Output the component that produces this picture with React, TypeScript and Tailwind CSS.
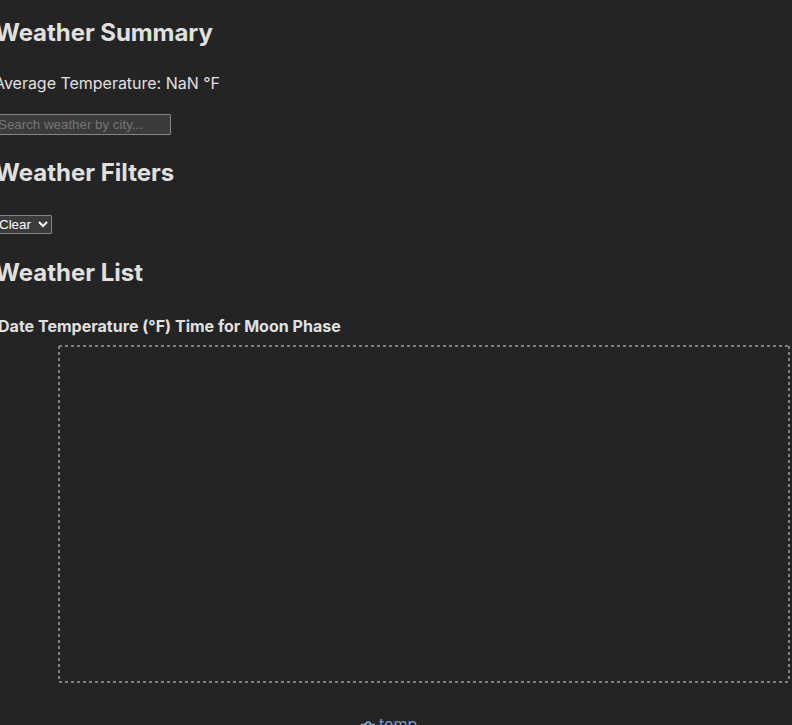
function Chart() {
  return (
    <svg className="mt-[7px] ml-[60px] block h-[380px] w-[734px] shrink-0" viewBox="0 0 734 380" fill="none">
      <g stroke="#808080" strokeWidth="2" strokeDasharray="3 3">
        <path d="M1 1H731" />
        <path d="M1 337H731" />
        <path d="M1 1V337" />
        <path d="M731 1V337" />
      </g>
      <path d="M303 379.5H307.67A2.33 2.33 0 1 1 312.33 379.5H317M312.33 379.5A2.33 2.33 0 1 1 307.67 379.5" stroke="#82add8" strokeWidth="1.75" />
      <text x="321" y="385" fill="#8097d2" fontSize="16" fontFamily="Inter, sans-serif">temp</text>
    </svg>
  );
}

export default function App() {
  return (
    <main className="h-[725px] w-[792px] overflow-hidden bg-[#242424] font-['Inter',sans-serif] text-[16px] leading-[24px] text-[#e0e0e0]">
      <div className="-ml-[2px] flex h-[725px] w-[794px] flex-col items-start">
        <h2 className="mt-[15px] -ml-[3px] text-[24px] font-bold leading-[36px] tracking-[-0.06px]">Weather Summary</h2>
        <p className="mt-[20px] -ml-[4px] tracking-[-0.02px]">Average Temperature: NaN °F</p>
        <input className="mt-[19px] -ml-[1px] h-[21px] w-[174px] rounded-[1px] border border-[#858585] bg-[#3b3b3b] font-['Liberation_Sans',sans-serif] text-[13.333px] placeholder:text-[#757575]" placeholder="Search weather by city..." />
        <h2 className="mt-[20px] -ml-[3px] text-[24px] font-bold leading-[36px]">Weather Filters</h2>
        <select className="mt-[24px] -ml-[4px] h-[19px] w-[58px] rounded-[1px] border border-[#858585] bg-[#3b3b3b] font-['Liberation_Sans',sans-serif] text-[13.333px] leading-none text-white"><option>Clear</option></select>
        <h2 className="mt-[21px] -ml-[3px] text-[24px] font-bold leading-[36px]">Weather List</h2>
        <p className="mt-[23px] font-bold tracking-[0.02px]">Date Temperature (°F) Time for Moon Phase</p>
        <Chart />
      </div>
    </main>
  );
}
